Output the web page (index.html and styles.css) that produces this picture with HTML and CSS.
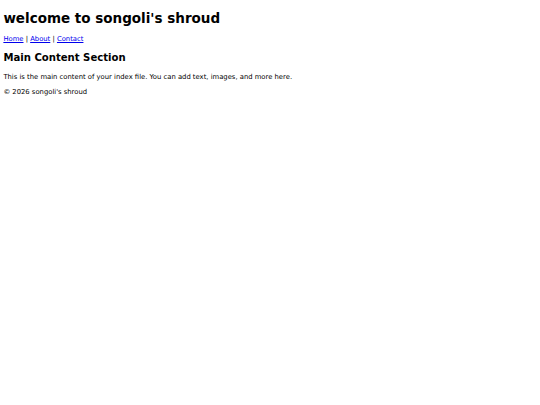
FILE: index.html
```html
<!DOCTYPE html>
<html lang="en">
<head>
<meta charset="utf-8">
<title>songoli's shroud</title>
<link rel="stylesheet" href="styles.css">
</head>
<body>
<header class="site-header">
  <h1 class="site-title">welcome to songoli's shroud</h1>
  <nav class="site-nav">
    <a href="#">Home</a> | <a href="#">About</a> | <a href="#">Contact</a>
  </nav>
</header>
<main class="site-main">
  <h2 class="section-title">Main Content Section</h2>
  <p class="text">This is the main content of your index file. You can add text, images, and more here.</p>
</main>
<footer class="site-footer">
  <p class="text">&copy; 2026 songoli's shroud</p>
</footer>
</body>
</html>
```
FILE: styles.css
```css
html {
  background: #ffffff;
}
body {
  margin: 3.375px;
  font-family: "DejaVu Sans", sans-serif;
  font-size: 6.82px;
  color: #000000;
}
.site-title {
  font-size: 13.5px;
  font-weight: bold;
  margin: 7px 0 9px;
}
.site-nav a {
  color: #0000ee;
  text-decoration: underline;
}
.section-title {
  font-size: 10.1px;
  font-weight: bold;
  margin: 8.4px 0 10.4px;
}
.text {
  margin: 6.75px 0;
}
```
